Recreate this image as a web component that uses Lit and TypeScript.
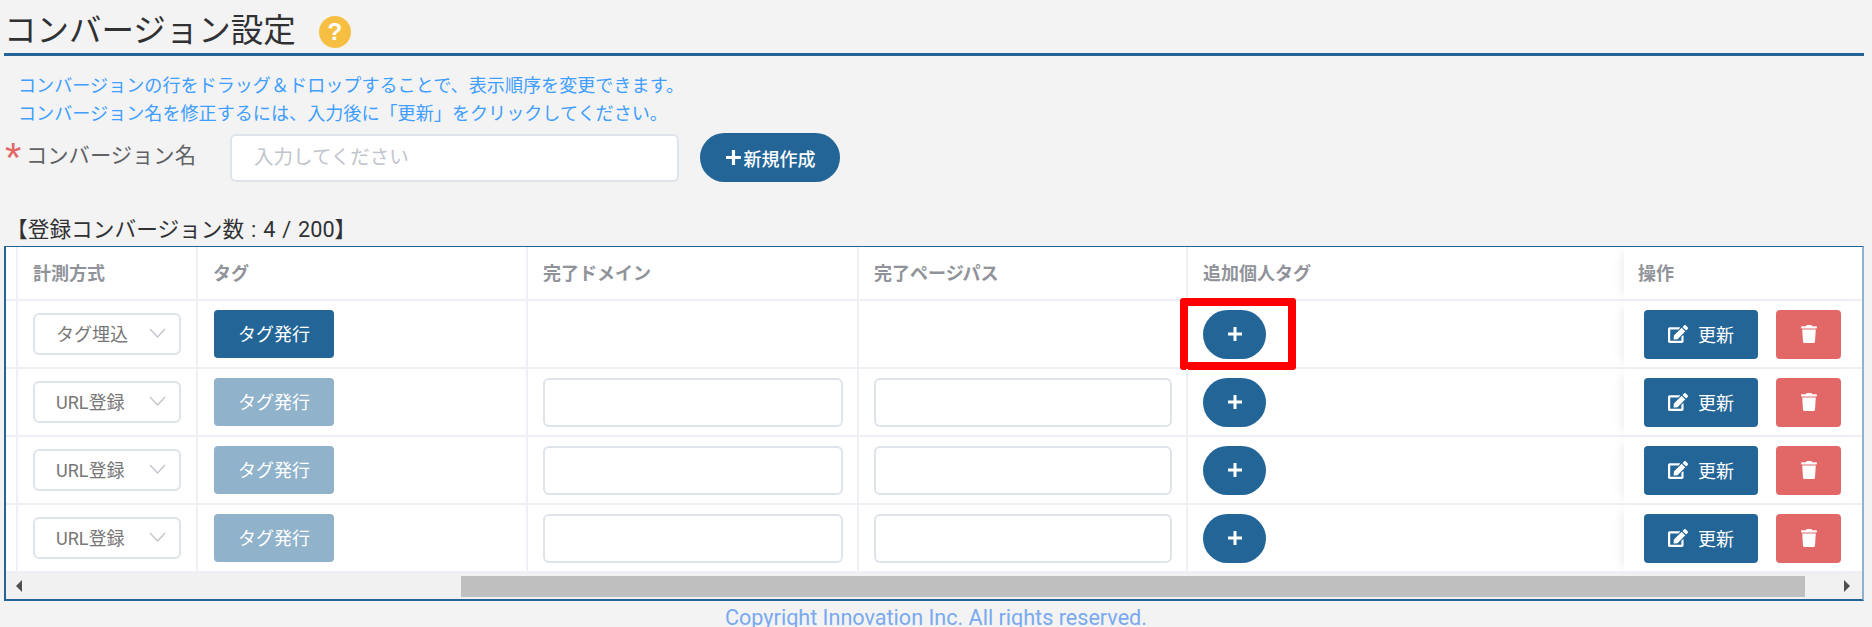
import { LitElement, html, css, svg } from "lit";
import { customElement } from "lit/decorators.js";

const editIcon = svg`<path d="M402.6 83.2l90.2 90.2c3.8 3.8 3.8 10 0 13.8L274.4 405.6l-92.8 10.3c-12.4 1.4-22.9-9.1-21.5-21.5l10.3-92.8L388.8 83.2c3.8-3.8 10-3.8 13.8 0zm162-22.9l-48.8-48.8c-15.2-15.2-39.9-15.2-55.2 0l-35.4 35.4c-3.8 3.8-3.8 10 0 13.8l90.2 90.2c3.8 3.8 10 3.8 13.8 0l35.4-35.4c15.2-15.3 15.2-40 0-55.2zM384 346.2V448H64V128h229.8c3.2 0 6.2-1.3 8.5-3.5l40-40c7.6-7.6 2.2-20.5-8.5-20.5H48C21.5 64 0 85.5 0 112v352c0 26.5 21.5 48 48 48h352c26.5 0 48-21.5 48-48V306.2c0-10.7-12.9-16-20.5-8.5l-40 40c-2.2 2.3-3.5 5.3-3.5 8.5z"/>`;
const trashIcon = svg`<path d="M432 32H312l-9.4-18.7A24 24 0 0 0 281.1 0H166.8a23.72 23.72 0 0 0-21.4 13.3L136 32H16A16 16 0 0 0 0 48v32a16 16 0 0 0 16 16h416a16 16 0 0 0 16-16V48a16 16 0 0 0-16-16zM53.2 467a48 48 0 0 0 47.9 45h245.8a48 48 0 0 0 47.9-45L416 128H32z"/>`;

const rows = [
  { method: "タグ埋込", active: true, inputs: false, marked: true },
  { method: "URL登録", active: false, inputs: true, marked: false },
  { method: "URL登録", active: false, inputs: true, marked: false },
  { method: "URL登録", active: false, inputs: true, marked: false },
];

@customElement("app-root")
export class AppRoot extends LitElement {
  static styles = css`
    :host {
      display: block;
      height: 627px;
      overflow: hidden;
      background: #f3f3f3;
      font-family: Roboto, "Noto Sans CJK JP", sans-serif;
      color: #303133;
    }
    .title {
      display: flex;
      align-items: center;
      gap: 23px;
      margin: 0 8px 0 4px;
      padding: 10px 0 0 0;
      box-sizing: border-box;
      height: 56px;
      border-bottom: 3px solid #236597;
      font-size: 32.5px;
      font-weight: 400;
      line-height: 43px;
    }
    .help {
      width: 32px;
      height: 32px;
      border-radius: 50%;
      background: #f7bf41;
      color: #fff;
      font: bold 24px/32px "Liberation Sans", sans-serif;
      text-align: center;
    }
    .notes {
      margin: 16px 0 0;
      padding-left: 18px;
      font-size: 18.1px;
      line-height: 28px;
      color: #409eff;
    }
    .form {
      display: flex;
      align-items: center;
      height: 49px;
      margin-top: 5px;
      padding-left: 5px;
    }
    .star {
      width: 21px;
      height: 49px;
      color: #e26868;
      font: 42px/49px "Liberation Sans", sans-serif;
    }
    .label {
      width: 204px;
      padding-bottom: 8px;
      font-size: 21.3px;
      color: #606266;
    }
    .name-input {
      width: 449px;
      height: 48px;
      box-sizing: border-box;
      border: 2px solid #dfe3ea;
      border-radius: 6px;
      background: #fff;
      padding: 0 22px;
      font: 400 19.5px Roboto, "Noto Sans CJK JP", sans-serif;
      outline: none;
    }
    .name-input::placeholder { color: #c0c4cc; opacity: 1; }
    .new {
      display: flex;
      align-items: center;
      justify-content: center;
      gap: 2px;
      width: 140px;
      height: 49px;
      margin-left: 21px;
      border: 0;
      border-radius: 25px;
      background: #236597;
      color: #fff;
      font: 500 18px Roboto, "Noto Sans CJK JP", sans-serif;
    }
    .count {
      margin: 36px 0 0 6px;
      height: 28px;
      font-size: 21.7px;
      word-spacing: 1.5px;
      line-height: 24px;
    }
    .table {
      margin: 0 8px 0 4px;
      border: 1px solid #236597;
      border-width: 1px 2px 2px 2px;
      border-right-color: #8fb2cf;
      background: #fff;
    }
    .row {
      display: grid;
      grid-template-columns: 12px 180px 330px 331px 329px 436px 238px;
      height: 68px;
      box-sizing: border-box;
      border-bottom: 2px solid #eef0f6;
    }
    .row.head { height: 54px; }
    .cell {
      display: flex;
      align-items: center;
      box-sizing: border-box;
      padding: 0 14px 0 15px;
      border-right: 2px solid #eef0f6;
      position: relative;
    }
    .cell.gutter { padding: 0; }
    .head .cell {
      padding-bottom: 2px;
      font-size: 18px;
      font-weight: 700;
      color: #909399;
    }
    .cell.last { border-right: 0; }
    .cell.fixed {
      border-right: 0;
      padding: 0 20px;
      gap: 18px;
      margin-bottom: -2px;
      border-bottom: 2px solid #eef0f6;
      background: #fff;
      box-shadow: -8px 0 10px -6px rgba(0, 0, 0, 0.08);
      z-index: 1;
    }
    .head .cell.fixed { padding: 0 14px 2px; }
    .select {
      display: flex;
      align-items: center;
      justify-content: space-between;
      width: 148px;
      height: 42px;
      box-sizing: border-box;
      border: 2px solid #dfe3ea;
      border-radius: 6px;
      padding: 0 13px 2px 21px;
      font-size: 18px;
      color: #777;
      flex: none;
    }
    .select svg { width: 17px; height: 10px; fill: none; stroke: #c0c4cc; stroke-width: 1.3; }
    .tag-btn {
      width: 120px;
      height: 48px;
      margin-left: 1px;
      padding: 0 0 3px;
      border: 0;
      border-radius: 4px;
      background: #236597;
      color: #fff;
      font: 400 18px Roboto, "Noto Sans CJK JP", sans-serif;
    }
    .tag-btn.off { background: #91b2cb; }
    .path {
      width: 100%;
      height: 49px;
      box-sizing: border-box;
      border: 2px solid #dfe3ea;
      border-radius: 6px;
      background: #fff;
    }
    .plus {
      display: flex;
      align-items: center;
      justify-content: center;
      width: 63px;
      height: 49px;
      border: 0;
      border-radius: 25px;
      background: #236597;
    }
    .marker {
      position: absolute;
      left: -8px;
      top: -3px;
      width: 116px;
      height: 72px;
      box-sizing: border-box;
      border: 8px solid #f00;
      border-radius: 3px;
    }
    .update, .remove {
      display: flex;
      align-items: center;
      justify-content: center;
      height: 49px;
      border: 0;
      border-radius: 4px;
      color: #fff;
      font: 400 18px Roboto, "Noto Sans CJK JP", sans-serif;
    }
    .update { width: 114px; gap: 10px; background: #236597; }
    .remove { width: 65px; background: #e26868; }
    .update svg, .remove svg { fill: #fff; }
    .update svg { width: 20px; height: 18px; }
    .remove svg { width: 16px; height: 18px; }
    .scrollbar {
      display: flex;
      align-items: center;
      height: 26px;
      box-sizing: border-box;
      background: #f1f1f1;
    }
    .arrow {
      width: 0;
      height: 0;
      border-style: solid;
      border-color: transparent;
    }
    .arrow.left { margin-left: 10px; border-width: 6px 6px 6px 0; border-right-color: #505050; }
    .arrow.right { margin-left: 39px; border-width: 6px 0 6px 6px; border-left-color: #505050; }
    .thumb {
      height: 21px;
      width: 1344px;
      margin-left: 439px;
      background: #bfbfbf;
    }
    .footer {
      margin-top: 5px;
      text-align: center;
      font-size: 21.6px;
      line-height: 24px;
      color: #79a9f0;
    }
  `;

  private plusIcon(size: number, weight: number) {
    return html`<svg width=${size} height=${size} viewBox="0 0 16 16" fill="none" stroke="#fff" stroke-width=${weight}>
      <path d="M8 1v14M1 8h14"></path>
    </svg>`;
  }

  render() {
    return html`
      <h1 class="title" style="margin-block:0">コンバージョン設定<span class="help">?</span></h1>
      <div class="notes">
        <div>コンバージョンの行をドラッグ＆ドロップすることで、表示順序を変更できます。</div>
        <div>コンバージョン名を修正するには、入力後に「更新」をクリックしてください。</div>
      </div>
      <div class="form">
        <span class="star">*</span>
        <span class="label">コンバージョン名</span>
        <input class="name-input" placeholder="入力してください" />
        <button class="new">${this.plusIcon(17, 3)}新規作成</button>
      </div>
      <div class="count">【登録コンバージョン数 : 4 / 200】</div>
      <div class="table">
        <div class="row head">
          <div class="cell gutter"></div>
          <div class="cell">計測方式</div>
          <div class="cell">タグ</div>
          <div class="cell">完了ドメイン</div>
          <div class="cell">完了ページパス</div>
          <div class="cell last">追加個人タグ</div>
          <div class="cell fixed">操作</div>
        </div>
        ${rows.map(
          (r) => html`
            <div class="row">
              <div class="cell gutter"></div>
              <div class="cell">
                <div class="select">
                  <span>${r.method}</span>
                  <svg viewBox="0 0 17 10"><path d="M1 1l7.5 8L16 1"></path></svg>
                </div>
              </div>
              <div class="cell">
                <button class="tag-btn ${r.active ? "" : "off"}">タグ発行</button>
              </div>
              <div class="cell">${r.inputs ? html`<div class="path"></div>` : ""}</div>
              <div class="cell">${r.inputs ? html`<div class="path"></div>` : ""}</div>
              <div class="cell last">
                <button class="plus">${this.plusIcon(16, 3)}</button>
                ${r.marked ? html`<div class="marker"></div>` : ""}
              </div>
              <div class="cell fixed">
                <button class="update">
                  <svg viewBox="0 0 576 512">${editIcon}</svg>更新
                </button>
                <button class="remove">
                  <svg viewBox="0 0 448 512">${trashIcon}</svg>
                </button>
              </div>
            </div>
          `
        )}
        <div class="scrollbar">
          <span class="arrow left"></span>
          <span class="thumb"></span>
          <span class="arrow right"></span>
        </div>
      </div>
      <div class="footer">Copyright Innovation Inc. All rights reserved.</div>
    `;
  }
}
